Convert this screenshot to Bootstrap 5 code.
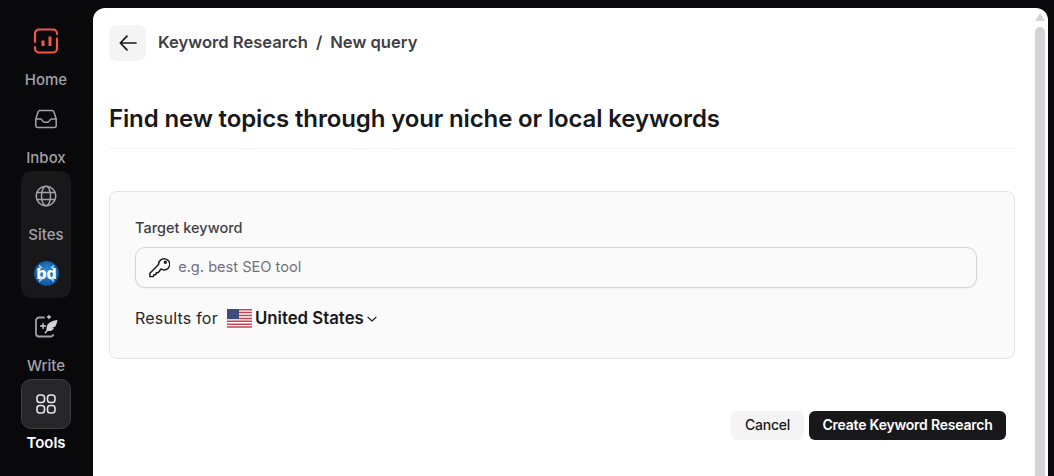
<!DOCTYPE html>
<html lang="en">
<head>
  <meta charset="UTF-8" />
  <meta name="viewport" content="width=device-width, initial-scale=1" />
  <title>Keyword Research - New query</title>
  <link href="https://cdn.jsdelivr.net/npm/bootstrap@5.3.0/dist/css/bootstrap.min.css" rel="stylesheet" />
  <style>
    html, body { height: 100%; }
    body {
      background: #09090b;
      font-family: Inter, "Liberation Sans", sans-serif;
      overflow: hidden;
    }
    .shell { height: 476px; }

    .side-rail { width: 93px; padding: 16px 1px 0 0; flex: none; }
    .side-item { width: 50px; }
    .side-inbox { margin-top: 1px; }
    .side-icon { width: 50px; height: 50px; border-radius: 10px; }
    .side-label { height: 27px; line-height: 27px; font-size: 15px; font-weight: 500; color: #a1a1aa; text-align: center; }
    .side-group { width: 50px; height: 127px; background: #18181b; border-radius: 10px; margin-bottom: 4px; }
    .side-item.is-active .side-icon { background: #27272a; border: 1px solid #3f3f46; }
    .side-item.is-active .side-label { color: #fff; font-weight: 600; }

    .main-panel { margin-top: 8px; width: 955px; height: 468px; background: #fff; border-radius: 12px 12px 0 0; overflow: hidden; }
    .main-body { width: 942px; padding: 17px 0 0 16px; flex: none; }
    .back-btn { width: 37px; height: 36px; background: #f4f4f5; border-radius: 8px; border: 0; padding: 0; }
    .crumbs { --bs-breadcrumb-margin-bottom: 2px; --bs-breadcrumb-divider-color: #3f3f46; --bs-breadcrumb-item-active-color: #3f3f46; --bs-breadcrumb-item-padding-x: 8px; font-size: 16.6px; font-weight: 600; color: #3f3f46; margin-left: 12px; }
    .page-title { font-size: 24px; font-weight: 600; color: #18181b; line-height: 32px; letter-spacing: -.135px; margin: 42px 0 0; }
    .title-rule { width: 907px; margin: 13px 0 42px; border-color: #f4f4f5; opacity: 1; }

    .query-card { width: 906px; height: 168px; background: #fafafa; border: 1px solid #e4e4e7; border-radius: 8px; padding: 26px 25px 0; }
    .field-label { font-size: 14.5px; font-weight: 500; color: #3f3f46; line-height: 20px; margin: 0 0 9px 0; }
    .keyword-box { width: 842px; height: 41px; background: #fafafa; border: 1px solid #d4d4d8; border-radius: 10px; padding: 0 12px; box-shadow: 0 1px 2px rgba(0,0,0,.05); }
    .keyword-box input { background: transparent; border: 0; outline: 0; box-shadow: none; padding: 0; margin-left: 8px; font-size: 14.6px; color: #18181b; }
    .keyword-box input::placeholder { color: #71717a; }
    .results-row { margin-top: 19px; height: 22px; }
    .results-text { font-size: 16px; letter-spacing: .22px; color: #27272a; }
    .country-flag { margin-left: 9px; }
    .country-name { font-size: 16.8px; font-weight: 600; color: #18181b; margin-left: 3px; padding-top: 2px; }
    .country-caret { margin: 2px 0 0 3px; }

    .action-row { width: 897px; margin-top: 52px; gap: 5px; }
    .cancel-btn { width: 73px; height: 29px; padding: 0 0 2px; background: #f4f4f5; border: 0; border-radius: 6px; font-size: 14px; font-weight: 500; letter-spacing: -.25px; color: #18181b; }
    .create-btn { width: 197px; height: 29px; padding: 0 0 2px; background: #18181b; border: 0; border-radius: 6px; font-size: 14px; font-weight: 600; letter-spacing: -.22px; color: #fff; }

    .scroll-rail { width: 10px; padding-top: 5px; }
    .scroll-up { width: 0; height: 0; margin: 0 auto; border-left: 5px solid transparent; border-right: 5px solid transparent; border-bottom: 8px solid #d4d4d8; }
    .scroll-thumb { flex: 1; margin-top: 6px; background: #d4d4d8; border-radius: 5px 5px 0 0; }
  </style>
</head>
<body>
  <div class="shell d-flex">
    <nav class="side-rail d-flex flex-column align-items-center">
      <div class="side-item">
        <div class="side-icon d-flex align-items-center justify-content-center">
          <svg width="26" height="26" viewBox="0 0 26 26" fill="none" stroke="#f4574a" stroke-width="2.200" stroke-linecap="round">
            <path d="M2 14V5.500a4 4 0 0 1 4-4h14a4 4 0 0 1 4 4v.5M24 10.500V20.500a4 4 0 0 1-4 4H6a4 4 0 0 1-4-4V19"/>
            <path d="M10 12.500V18M17 8.500V18" stroke-width="3" stroke-linecap="butt"/>
          </svg>
        </div>
        <div class="side-label">Home</div>
      </div>
      <div class="side-item side-inbox">
        <div class="side-icon d-flex align-items-center justify-content-center">
          <svg width="24" height="24" viewBox="0 0 24 24" fill="none" stroke="#a1a1aa" stroke-width="1.500" stroke-linejoin="round">
            <path d="M6 3.500h12a2 2 0 0 1 1.800 1.200L22.200 12v6.500a2 2 0 0 1-2 2H3.800a2 2 0 0 1-2-2V12L4.200 4.700A2 2 0 0 1 6 3.500z"/>
            <path d="M2 12h4.500c1 0 1.400.7 1.800 1.500.5 1 1.200 1.800 2.700 1.800h2c1.500 0 2.200-.8 2.700-1.800.4-.8.8-1.500 1.800-1.500H22"/>
          </svg>
        </div>
        <div class="side-label">Inbox</div>
      </div>
      <div class="side-group">
        <div class="side-icon d-flex align-items-center justify-content-center">
          <svg width="22" height="22" viewBox="0 0 22 22" fill="none" stroke="#a1a1aa" stroke-width="1.500">
            <circle cx="11" cy="11" r="9.800"/>
            <ellipse cx="11" cy="11" rx="4.500" ry="9.800"/>
            <path d="M2 7.500h18M2 14.500h18"/>
          </svg>
        </div>
        <div class="side-label">Sites</div>
        <div class="side-icon d-flex align-items-center justify-content-center">
          <svg width="25" height="25" viewBox="0 0 25 25">
            <defs>
              <radialGradient id="siteBlue" cx="50%" cy="45%" r="55%">
                <stop offset="0" stop-color="#2f95e0"/>
                <stop offset="1" stop-color="#0b5297"/>
              </radialGradient>
            </defs>
            <circle cx="12.500" cy="12.500" r="12.500" fill="url(#siteBlue)"/>
            <path d="M5 3.500 9 7 5.500 7.500zM20 3.500 16 7l3.500.5zM5 21.500 9 18l-3.500-.5zM20 21.500 16 18l3.500-.5z" fill="#a9d6f2"/>
            <text x="12.500" y="17.500" text-anchor="middle" font-family="Inter, sans-serif" font-size="15" font-weight="800" fill="#fff" textLength="20" lengthAdjust="spacingAndGlyphs">bd</text>
          </svg>
        </div>
      </div>
      <div class="side-item">
        <div class="side-icon d-flex align-items-center justify-content-center">
          <svg width="24" height="24" viewBox="0 0 24 24" fill="none">
            <path d="M10 2.500H5a3 3 0 0 0-3 3V18.500a3 3 0 0 0 3 3h12a3 3 0 0 0 2.300-1.500" stroke="#a1a1aa" stroke-width="1.800" stroke-linecap="round"/>
            <path d="M9 8.500v5M6.500 11h5M15 .5v3M13.500 2h3" stroke="#d4d4d8" stroke-width="1.300" stroke-linecap="round"/>
            <path d="M23.500 5c-4 .5-9 2-10.500 6-.6 1.700-.5 3-.5 4l-2 3 1 .8 2.200-2.800c2.500.3 5-.3 6.300-2.800l-2-.2 3-1.300c1.300-1.600 2-3.700 2.500-6.700z" fill="#d4d4d8"/>
          </svg>
        </div>
        <div class="side-label">Write</div>
      </div>
      <div class="side-item is-active">
        <div class="side-icon d-flex align-items-center justify-content-center">
          <svg width="20" height="20" viewBox="0 0 20 20" fill="none" stroke="#e4e4e7" stroke-width="1.600">
            <rect x="1" y="1" width="7.500" height="7.500" rx="2.800"/>
            <rect x="11.500" y="1" width="7.500" height="7.500" rx="2.800"/>
            <rect x="1" y="11.500" width="7.500" height="7.500" rx="2.800"/>
            <rect x="11.500" y="11.500" width="7.500" height="7.500" rx="2.800"/>
          </svg>
        </div>
        <div class="side-label">Tools</div>
      </div>
    </nav>

    <main class="main-panel d-flex">
      <div class="main-body">
        <div class="d-flex align-items-center">
          <button type="button" class="btn back-btn d-flex align-items-center justify-content-center" aria-label="Back">
            <svg width="20" height="20" viewBox="0 0 20 20" fill="none" stroke="#18181b" stroke-width="1.700" stroke-linecap="round" stroke-linejoin="round">
              <path d="M18 10H2.500M9 3.200 2.300 10 9 16.800"/>
            </svg>
          </button>
          <ol class="breadcrumb crumbs">
            <li class="breadcrumb-item active">Keyword Research</li>
            <li class="breadcrumb-item active">New query</li>
          </ol>
        </div>

        <h1 class="page-title">Find new topics through your niche or local keywords</h1>
        <hr class="title-rule" />

        <div class="card query-card">
          <label class="field-label" for="keyword">Target keyword</label>
          <div class="keyword-box d-flex align-items-center">
            <svg width="23" height="23" viewBox="0 0 23 23" fill="none" stroke="#18181b" stroke-width="1.500" stroke-linecap="round" stroke-linejoin="round">
              <path d="M11 8.500 2 17.500v3.500h3.500l.5-2h2l.5-2h2l3-4A5.800 5.800 0 1 0 11 8.500z"/>
              <circle cx="18" cy="6" r="1"/>
            </svg>
            <input id="keyword" class="form-control" type="text" placeholder="e.g. best SEO tool" />
          </div>
          <div class="results-row d-flex align-items-center">
            <span class="results-text">Results for</span>
            <svg class="country-flag" width="25" height="19" viewBox="0 0 25 19">
              <rect width="25" height="19" fill="#fff"/>
              <path d="M0 .7h25M0 3.600h25M0 6.500h25M0 9.400h25M0 12.300h25M0 15.200h25M0 18.100h25" stroke="#c9424f" stroke-width="1.500"/>
              <rect width="12" height="10" fill="#3f4a7d"/>
            </svg>
            <span class="country-name">United States</span>
            <svg class="country-caret" width="10" height="10" viewBox="0 0 10 10" fill="none" stroke="#27272a" stroke-width="1.200" stroke-linecap="round" stroke-linejoin="round">
              <path d="M1 3.200 5 7l4-3.800"/>
            </svg>
          </div>
        </div>

        <div class="action-row d-flex justify-content-end">
          <button type="button" class="btn cancel-btn">Cancel</button>
          <button type="button" class="btn create-btn">Create Keyword Research</button>
        </div>
      </div>
      <div class="scroll-rail d-flex flex-column">
        <div class="scroll-up"></div>
        <div class="scroll-thumb"></div>
      </div>
    </main>
  </div>
</body>
</html>
